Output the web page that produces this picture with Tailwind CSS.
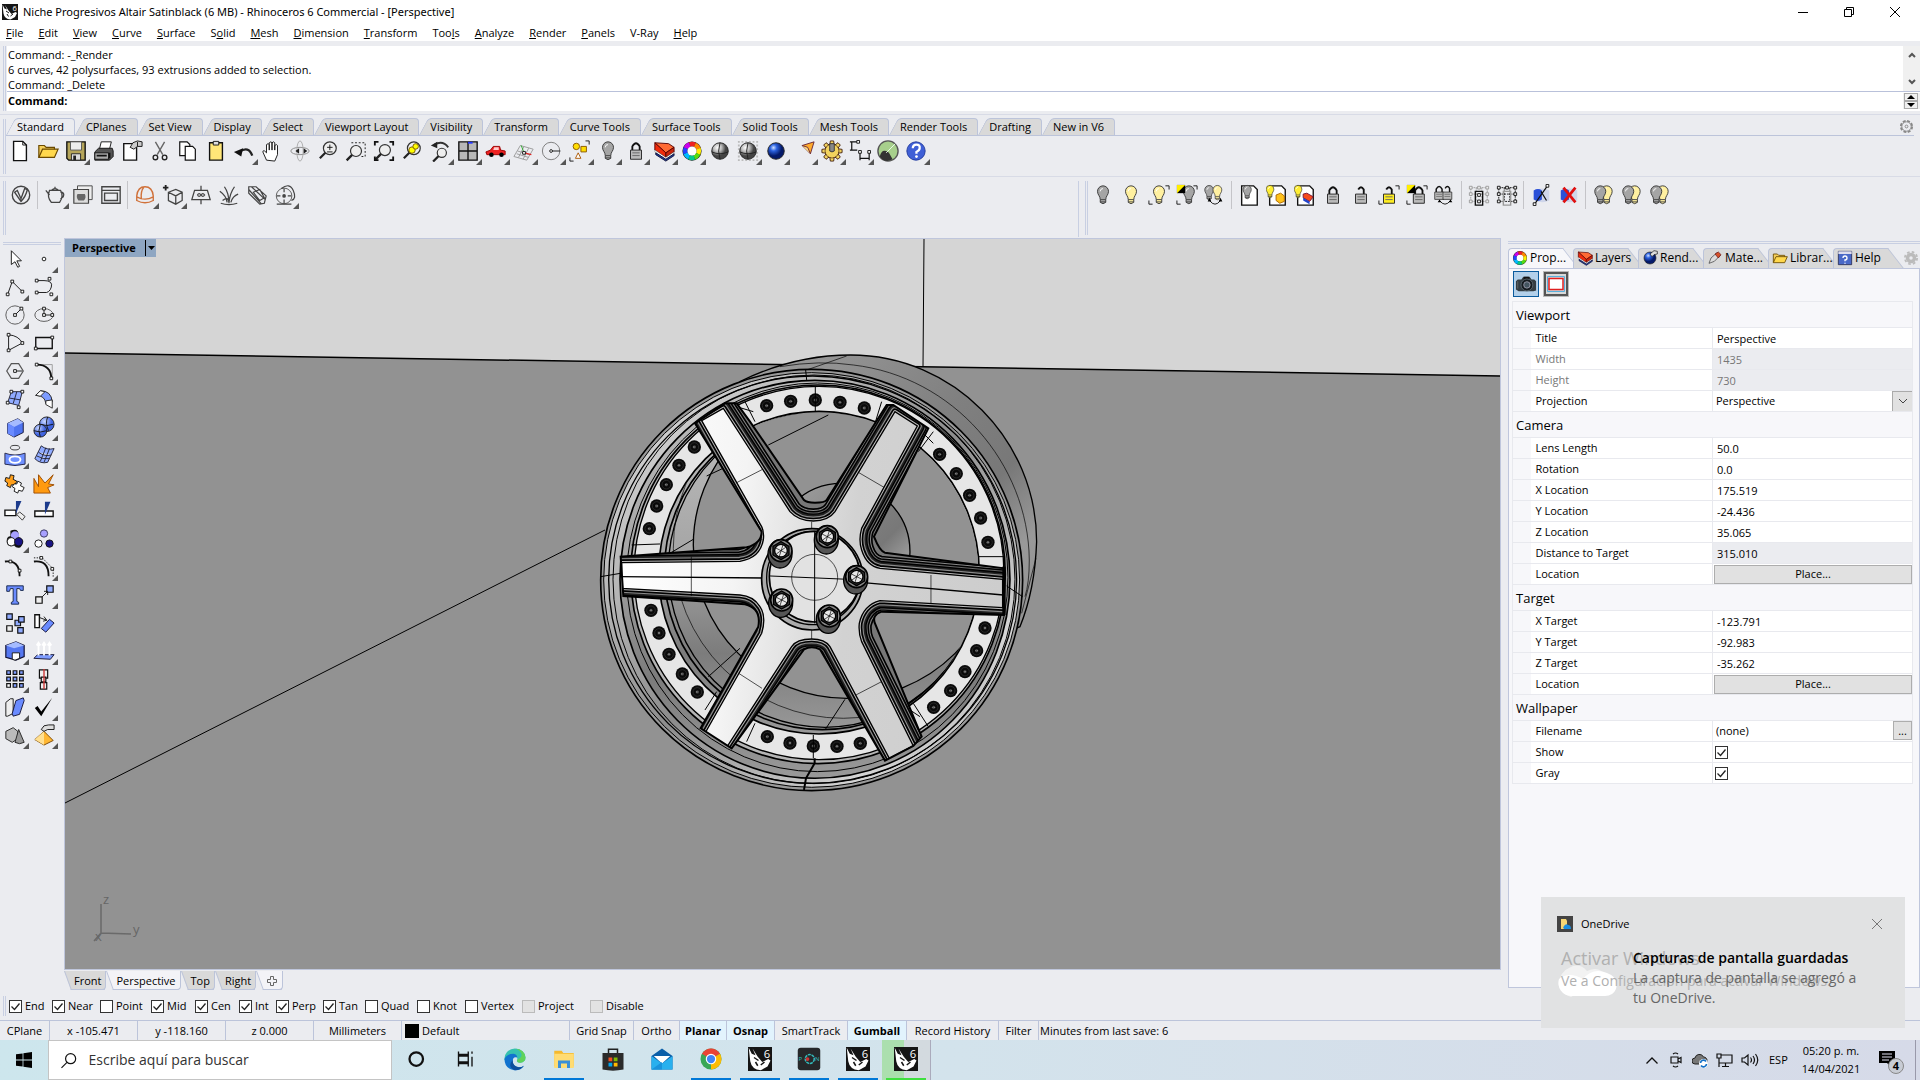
<!DOCTYPE html>
<html lang="en">
<head>
<meta charset="utf-8">
<title>Niche Progresivos Altair Satinblack (6 MB) - Rhinoceros 6 Commercial - [Perspective]</title>
<script src="https://cdn.jsdelivr.net/npm/@tailwindcss/browser@4"></script>
</head>
<body class="flex h-screen flex-col overflow-hidden bg-[#ebecf0] font-['Open_Sans',sans-serif] text-[11px] leading-4 text-black">

<header class="bg-white">
  <div class="flex h-[23px] items-center">
    <svg class="ml-[2px] mr-[5px] size-4" viewBox="0 0 32 32"><use href="#rhino"/></svg>
    <h1 class="flex-1 font-['Noto_Sans',sans-serif]">Niche Progresivos Altair Satinblack (6 MB) - Rhinoceros 6 Commercial - [Perspective]</h1>
    <button aria-label="Minimize" class="grid h-5 w-[46px] place-items-center"><svg class="size-[10px]" viewBox="0 0 10 10" stroke="#000"><path d="M0 5.5h10"/></svg></button>
    <button aria-label="Restore" class="grid h-5 w-[46px] place-items-center"><svg class="size-[10px]" viewBox="0 0 10 10" fill="none" stroke="#000"><path d="M.5 2.500h7v7h-7zM2.500 2.500v-2h7v7h-2"/></svg></button>
    <button aria-label="Close" class="mr-[2px] grid h-5 w-[46px] place-items-center"><svg class="size-[10px]" viewBox="0 0 10 10" stroke="#000"><path d="M0 0l10 10M10 0L0 10"/></svg></button>
  </div>
  <nav id="menu" class="flex h-[18px] items-center gap-[15px] pl-[6px] pb-[2px] pt-1"></nav>
</header>

<section class="mt-[5px] flex h-[65px] shrink-0 pl-[3px]" aria-label="Command history">
  <div class="mr-[1px] w-[3px] border-x border-[#c8cfe2]"></div>
  <div class="flex flex-1 flex-col bg-white">
    <div class="flex h-[46px] border-b border-[#b9c1da]">
      <div class="flex-1 pl-[1px] pt-[1px] leading-[15px]"><p>Command: -_Render</p><p>6 curves, 42 polysurfaces, 93 extrusions added to selection.</p><p>Command: _Delete</p></div>
      <div class="flex w-[17px] flex-col items-center justify-between bg-[#f0f0f0] py-[5px]">
        <svg class="size-2" viewBox="0 0 8 8" fill="none" stroke="#555" stroke-width="2"><path d="M1 6l3-3 3 3"/></svg>
        <svg class="size-2" viewBox="0 0 8 8" fill="none" stroke="#555" stroke-width="2"><path d="M1 2l3 3 3-3"/></svg>
      </div>
    </div>
    <div class="flex flex-1 items-center pb-[2px] font-bold">
      <label for="cmd" class="pl-[1px]">Command:</label><input id="cmd" class="ml-1 h-4 flex-1 outline-none">
      <div class="flex w-[17px] flex-col items-center bg-[#f0f0f0] pr-[2px]">
        <button aria-label="Previous" class="grid h-2 w-[14px] place-items-center border border-[#aaa]"><svg class="h-1 w-2" viewBox="0 0 8 4"><path d="M0 4l4-4 4 4z"/></svg></button>
        <button aria-label="Next" class="grid h-2 w-[14px] place-items-center border border-[#aaa]"><svg class="h-1 w-2" viewBox="0 0 8 4"><path d="M0 0l4 4 4-4z"/></svg></button>
      </div>
    </div>
  </div>
</section>

<section class="mt-[3px] flex h-[63px] shrink-0 border-y border-[#d8dbe6] pl-[3px] pr-[6px]" aria-label="Standard toolbar">
  <div class="mt-1 mb-[2px] w-[3px] border-x border-[#c8cfe2]"></div>
  <div class="min-w-0 flex-1">
    <div class="flex h-[21px] items-end border-b border-[#bcc4da]">
      <div id="tabs" role="tablist" class="flex"></div>
      <button aria-label="Options" class="mb-[1px] ml-auto grid size-4 place-items-center"><svg class="size-[15px]" viewBox="0 0 16 16" fill="none" stroke="#888"><circle cx="8" cy="8" r="6" stroke-width="2" stroke-dasharray="3.100 1.600"/><circle cx="8" cy="8" r="5"/><circle cx="8" cy="8" r="1.500"/></svg></button>
    </div>
    <div id="tb1" class="flex pt-[1px]"></div>
  </div>
</section>

<section class="flex h-[61px] shrink-0 pl-[3px] pt-1" aria-label="V-Ray and visibility toolbars">
  <div class="mb-[3px] w-[3px] border-x border-[#c8cfe2]"></div>
  <div id="tb2" class="mb-[1px] flex w-[1073px] items-start border-r border-[#c8cfe2] pl-[1px]"></div>
  <div class="mb-[3px] ml-[6px] w-[3px] border-x border-[#c8cfe2]"></div>
  <div id="tb3" class="flex items-start pl-[1px]"></div>
</section>

<main class="flex min-h-0 flex-1">
  <aside class="w-16 shrink-0" aria-label="Main tools">
    <div class="mx-[3px] mt-1 h-[3px] border-y border-[#c8cfe2]"></div>
    <div id="tools" class="grid w-[58px] grid-cols-2 pl-[1px]"></div>
  </aside>

  <div class="flex min-w-0 flex-1 flex-col">
    <div class="relative min-h-0 flex-1 border border-[#bfc6dc] bg-[#929292]">
      <svg class="absolute inset-0 size-full" viewBox="0 0 1435 730" preserveAspectRatio="xMidYMid slice" fill="none" stroke="#000">
        <defs>
          <linearGradient id="face" x1="0" y1=".4" x2="1" y2=".5"><stop offset="0" stop-color="#fff"/><stop offset=".3" stop-color="#f4f4f4"/><stop offset=".6" stop-color="#d2d2d2"/><stop offset="1" stop-color="#cdcdcd"/></linearGradient>
          <linearGradient id="rim" x1="0" y1="0" x2="1" y2="1"><stop offset="0" stop-color="#e4e4e4"/><stop offset=".25" stop-color="#bbb"/><stop offset=".5" stop-color="#8c8c8c"/><stop offset=".8" stop-color="#d5d5d5"/><stop offset="1" stop-color="#999"/></linearGradient>
          <linearGradient id="barrel" x1="0" y1="0" x2="1" y2="1"><stop offset="0" stop-color="#a5a5a5"/><stop offset=".45" stop-color="#808080"/><stop offset=".62" stop-color="#787878"/><stop offset=".75" stop-color="#999"/><stop offset="1" stop-color="#8a8a8a"/></linearGradient>
          <linearGradient id="inner" x1="0" y1="0" x2="0" y2="1"><stop offset="0" stop-color="#bdbdbd"/><stop offset=".45" stop-color="#a5a5a5"/><stop offset=".75" stop-color="#7c7c7c"/><stop offset="1" stop-color="#999"/></linearGradient>
          <clipPath id="star"><path d="M345 250L435 190L470 190L510 245L672 480Q680 488 705 488Q735 488 740 480L920 195L940 195L1045 265L882 590Q900 635 915 638L1272 685V825L905 815Q875 825 885 850L1025 1190L1000 1218L915 1262L720 928Q695 915 672 928L455 1225L362 1165L535 860Q545 805 495 793L130 768L122 650L500 622Q545 610 545 575Z"/></clipPath>
          <g id="bolt"><circle r="20" fill="#0a0a0a" stroke="none"/><circle r="13" stroke="#444" stroke-width="1.500"/><circle r="5" fill="#999" stroke="#000" stroke-width="2"/><path d="M0-6V6" stroke="#222" stroke-width="2"/></g>
          <g id="lug"><ellipse cx="-3" cy="10" rx="36" ry="42" fill="#555" stroke-width="4"/><circle r="33" fill="#888" stroke-width="5"/><path d="M0-27L24-13L24 13L0 27L-24 13L-24-13Z" fill="#333" stroke-width="4"/><circle r="19" fill="#e8e8e8" stroke-width="4"/><path d="M-16-8L16 8M-5 17L6-17M-14 10L14-10" stroke-width="2"/></g>
        </defs>
        <path d="M0 0H1435V137L0 114Z" fill="#d5d5d5" stroke="none"/>
        <path d="M0 114L1435 137" stroke-width="1.500"/>
        <path d="M859 0L858 128M0 564L540 291"/>
        <g transform="translate(515 101) scale(.3333)" stroke-width="4">
          <path d="M480 125Q640 45 812 45C1120 45 1370 300 1370 605Q1365 750 1320 860L700 1100L300 600Z" fill="url(#barrel)"/>
          <path d="M600 80Q720 60 820 75C1120 110 1345 370 1348 660Q1348 730 1335 770M680 90L800 48M1325 820L1368 655" stroke-width="2"/>
          <ellipse cx="695" cy="720" rx="633" ry="632" fill="#999" stroke-width="5"/>
          <ellipse cx="695" cy="720" rx="624" ry="622" fill="url(#rim)" stroke-width="3"/>
          <ellipse cx="698" cy="719" rx="612" ry="611" stroke-width="4"/>
          <ellipse cx="702" cy="718" rx="603" ry="613" stroke-width="3"/>
          <ellipse cx="705" cy="718" rx="585" ry="597" fill="url(#inner)" stroke-width="5"/>
          <ellipse cx="712" cy="712" rx="572" ry="583" stroke-width="3"/>
          <ellipse cx="714" cy="703" rx="562" ry="568" fill="#b5b5b5" stroke-width="5"/>
          <ellipse cx="717" cy="699" rx="555" ry="560" fill="#e6e6e6" stroke-width="4"/>
          <ellipse cx="717" cy="698" rx="481" ry="484" fill="url(#inner)" stroke-width="5"/>
          <clipPath id="hole"><ellipse cx="717" cy="698" rx="478" ry="481"/></clipPath>
          <g clip-path="url(#hole)">
            <ellipse cx="727" cy="693" rx="474" ry="476" stroke-width="5"/>
            <ellipse cx="735" cy="688" rx="470" ry="474" stroke-width="4"/>
            <circle cx="790" cy="625" r="510" stroke-width="2"/>
            <circle cx="800" cy="615" r="460" fill="#929292"/>
            <path d="M565 315L745 225M380 408L440 380M270 640L340 598M385 1010L480 925M735 1170L795 1078" stroke-width="3"/>
            <circle cx="785" cy="635" r="205" fill="url(#barrel)"/>
          </g>
          <path d="M495 185L525 245M470 200L520 215M905 185L885 250M1060 275L1015 335M1035 285L1060 310M155 615L240 612M1195 650H1275M1195 680L1275 685M1000 1090L1045 1160M990 1110L1020 1130M500 1205L525 1150M375 1110L410 1055" stroke-width="3"/>
          <g id="bolts"></g>
          <g clip-path="url(#star)">
            <path d="M0 0H1400V1400H0Z" fill="#777" stroke="none"/>
            <g stroke-linejoin="round">
              <path id="top" d="M365 242L430 205L630 515Q655 543 700 543Q745 543 765 515L945 215L1012 258L845 565Q835 600 845 630Q860 678 900 685L1268 718V803L900 782Q850 795 838 850Q835 880 845 905L1000 1218L928 1255L750 920Q735 897 695 897Q650 897 635 920L440 1222L375 1180L545 880Q560 830 540 800Q520 768 480 765L125 745V668L480 664Q540 655 550 600Q553 575 545 560Z" stroke-width="76"/>
            </g>
            <g stroke-linejoin="round" id="bands"></g>
            <path d="M365 242L430 205L630 515Q655 543 700 543Q745 543 765 515L945 215L1012 258L845 565Q835 600 845 630Q860 678 900 685L1268 718V803L900 782Q850 795 838 850Q835 880 845 905L1000 1218L928 1255L750 920Q735 897 695 897Q650 897 635 920L440 1222L375 1180L545 880Q560 830 540 800Q520 768 480 765L125 745V668L480 664Q540 655 550 600Q553 575 545 560Z" fill="url(#face)" stroke-width="4"/>
          </g>
          <path d="M345 250L435 190L470 190L510 245L672 480Q680 488 705 488Q735 488 740 480L920 195L940 195L1045 265L882 590Q900 635 915 638L1272 685V825L905 815Q875 825 885 850L1025 1190L1000 1218L915 1262L720 928Q695 915 672 928L455 1225L362 1165L535 860Q545 805 495 793L130 768L122 650L500 622Q545 610 545 575Z" stroke-width="6"/>
          <path d="M470 428L548 388M835 397L912 442M334 650V768M1053 705V790M476 1000L546 1045M828 1065L905 1025M695 545V565M695 870V897" stroke-width="2"/>
          <path d="M120 710L550 714M850 728L1270 765" stroke-width="4"/>
          <path d="M1272 680V825" stroke-width="10"/>
          <circle cx="697" cy="718" r="152" fill="#aaa" stroke-width="5"/>
          <circle cx="700" cy="714" r="140" fill="#b8b8b8" stroke-width="4"/>
          <circle cx="704" cy="710" r="136" fill="#e2e2e2" stroke-width="5"/>
          <circle cx="704" cy="712" r="69" stroke-width="2"/>
          <path d="M704 575V850M570 708L850 720" stroke-width="3"/>
          <g id="lugs"></g>
          <path d="M704 1255V1270L678 1315L672 1350" stroke-width="6"/>
          <path d="M677 90L680 120M62 710L122 700M1280 738L1328 770M706 140V215M700 1185V1255" stroke-width="3"/>
        </g>
        <path d="M36 665V694L66 695M29 702L36 694" stroke="#6a6a6a" stroke-width="1.500"/>
        <g fill="#666" stroke="none" font-family="Open Sans, sans-serif" font-size="13"><text x="38" y="665">z</text><text x="68" y="695">y</text><text x="30" y="702">x</text></g>
      </svg>
      <div class="relative flex h-[18px] w-[91px] items-center bg-[#8ea6c2] pl-[7px] font-bold">
        <span class="flex-1">Perspective</span>
        <button aria-label="Viewport menu" class="grid h-4 w-[11px] place-items-center border-l border-black"><svg class="h-1 w-[7px]" viewBox="0 0 7 4"><path d="M0 0h7l-3.500 4z"/></svg></button>
      </div>
    </div>
    <div id="vtabs" role="tablist" class="flex h-6 items-start pt-[1px]"></div>
  </div>

  <aside class="mb-[-6px] flex w-[419px] shrink-0 flex-col pl-[7px]" aria-label="Properties panel">
    <div class="mt-[3px] h-[3px] border-y border-[#c8cfe2]"></div>
    <div id="ptabs" role="tablist" class="mt-1 flex h-5 items-end"></div>
    <div class="mb-3 flex-1 border border-[#bfc6dc] bg-[#f7f7fa] pl-[3px] pr-[6px] pt-[2px]">
      <div class="flex gap-1 pl-[1px]">
        <button aria-label="Camera" class="grid size-[26px] place-items-center border border-[#0a5a9c] bg-[#b3d0ea]"><svg class="size-[22px]" viewBox="0 0 24 24"><path d="M1 9l2-2h4l2-3h7l2 3h3l2 2v10l-3 1H4l-3-2z" fill="#333c42"/><path d="M10 4h5l1 3H9z" fill="#111"/><circle cx="13" cy="13" r="6.500" fill="#161c20" stroke="#5b6870"/><circle cx="13" cy="13" r="3.500" fill="#445560" stroke="#99a"/><path d="M3 9v8" stroke="#666"/></svg></button>
        <button aria-label="Frame" class="grid size-[26px] place-items-center border border-[#bbb] bg-[#e8e8e8]"><svg class="size-6" viewBox="0 0 24 24"><path d="M1 1h22v22H1z" fill="#d8d8d8" stroke="#555" stroke-width="2"/><path d="M3.500 4.500h17v15h-17z" fill="#d8d8d8" stroke="#58b0dd"/><path d="M5 6.500h14v11H5z" fill="#fff" stroke="#e02020" stroke-width="1.500"/></svg></button>
      </div>
      <div id="props" class="mt-1"></div>
    </div>
  </aside>
</main>

<section class="flex h-[26px] shrink-0 items-center pb-[2px] pl-[3px]" aria-label="Object snaps">
  <div class="mr-[3px] h-5 w-[3px] border-x border-[#c8cfe2]"></div>
  <div id="osnap" class="flex items-center"></div>
</section>

<footer id="status" class="flex h-5 shrink-0 border-t border-[#bcc4da] leading-[19px]"></footer>

<nav class="flex h-10 shrink-0 items-stretch bg-linear-to-r from-[#cde6ed] via-[#d3e3ec] via-50% to-[#d6dae8]" aria-label="Taskbar">
  <button aria-label="Start" class="grid w-12 place-items-center"><svg class="size-4" viewBox="0 0 16 16"><path d="M0 2.300L6.600 1.400V7.600H0zM7.400 1.300L16 0V7.600H7.400zM0 8.400H6.600V14.600L0 13.700zM7.400 8.400H16V16L7.400 14.700z"/></svg></button>
  <label class="flex w-[344px] items-center gap-3 border border-[#c4c4c4] bg-white pl-3">
    <svg class="size-[17px]" viewBox="0 0 17 17" fill="none" stroke="#111" stroke-width="1.300"><circle cx="10.500" cy="6.500" r="5.500"/><path d="M6.500 10.500L0.500 16.500"/></svg>
    <input class="w-full text-sm outline-none placeholder:text-[#333]" placeholder="Escribe aquí para buscar" aria-label="Buscar">
  </label>
  <div id="apps" class="flex"></div>
  <div class="ml-auto flex items-center">
    <button aria-label="Show hidden icons" class="mr-3"><svg class="h-[7px] w-3" viewBox="0 0 12 7" fill="none" stroke="#111" stroke-width="1.300"><path d="M.5 6.500L6 1l5.500 5.500"/></svg></button>
    <svg class="mr-[10px] h-4 w-3" viewBox="0 0 12 16" fill="none" stroke="#111" stroke-width="1.200"><path d="M1 5h7v6H1zM8 7l3-1.500v5L8 9M3 2q2.500-2 5 0M3 14q2.500 2 5 0"/></svg>
    <svg class="mr-2 size-4" viewBox="0 0 16 16"><path d="M3 12a3 3 0 010-6 4.500 4.500 0 018.500-1A3.500 3.500 0 0115 9v3z" fill="#777" stroke="#222"/><circle cx="11.500" cy="11.500" r="4.500" fill="#fff"/><path d="M8.500 11a3 3 0 015.500-1.500M14.500 12a3 3 0 01-5.500 1.500" stroke="#1270c8" fill="none" stroke-width="1.700"/></svg>
    <svg class="mr-2 h-4 w-[17px]" viewBox="0 0 17 16" fill="none" stroke="#111" stroke-width="1.200"><path d="M5 3h11v8H3.500M9.500 11v3M6 14.500h7M1 2h4v4H1zM3 6v9"/></svg>
    <svg class="mr-[10px] h-4 w-[18px]" viewBox="0 0 18 16" fill="none" stroke="#111" stroke-width="1.200"><path d="M1 6h2.500L7 3v10L3.500 10H1zM9.500 5.500q2 2.500 0 5M12 4q3 4 0 8M14.500 2q4.500 6 0 12"/></svg>
    <span class="mr-2 w-6">ESP</span>
    <time class="mr-[18px] w-[60px] text-center leading-[18px]">05:20 p. m.<br>14/04/2021</time>
    <button aria-label="Notifications" class="relative mr-3 h-6 w-6"><svg class="h-6 w-6" viewBox="0 0 24 24"><path d="M0 3h16v12h-4v4l-4-4H0z"/><path d="M3 6h10M3 9h10M3 12h7" stroke="#dde"/></svg><span class="absolute -right-[1px] bottom-[-2px] size-4 rounded-full border border-[#888] bg-[#c8ccd4] text-center font-bold leading-[14px]">4</span></button>
    <div class="h-full w-[5px] border-l border-[#99a]"></div>
  </div>
</nav>

<div class="absolute bottom-[52px] right-[15px] h-[131px] w-[364px] bg-[#e1e2e3]" role="alert">
  <p class="absolute left-5 top-[45px] whitespace-nowrap text-lg leading-8 text-[#b0b0b0]">Activar Windows</p>
  <svg class="absolute left-4 top-[68px] h-8 w-[60px]" viewBox="0 0 60 32"><path d="M14 32a14 15 0 01-2-29Q22-3 30 6Q44 0 48 12L14 32z" fill="#f2f2f2"/><path d="M14 31A13 13 0 012 14Q12 6 26 14Q36 2 50 8Q62 12 59 24Q56 31 48 31z" fill="#fff"/></svg>
  <p class="absolute left-5 top-[74px] whitespace-nowrap text-[14px] leading-5 text-[#b0b0b0]">Ve a Configuración para activar Windows.</p>
  <div class="relative flex h-[54px] items-center gap-2 pl-4 pr-[23px]">
    <svg class="size-4" viewBox="0 0 16 16"><path d="M0 0h16v16H0z" fill="#444"/><path d="M4 3h5l1 2v8H4z" fill="#f7d774"/><path d="M7 13a2 2 0 010-3q2-3 4-1 3 0 3 4z" fill="#1a8fe3"/></svg>
    <span class="flex-1">OneDrive</span>
    <button aria-label="Dismiss"><svg class="size-[10px]" viewBox="0 0 10 10" stroke="#777"><path d="M0 0l10 10M10 0L0 10"/></svg></button>
  </div>
  <div class="relative -mt-[3px] pl-[92px] text-[14px] leading-5"><p class="font-semibold">Capturas de pantalla guardadas</p><p class="text-[#666]">La captura de pantalla se agregó a<br>tu OneDrive.</p></div>
</div>

<svg class="absolute size-0" aria-hidden="true"><defs><radialGradient id="gs" cx=".35" cy=".3"><stop offset="0" stop-color="#fff"/><stop offset=".5" stop-color="#bbb"/><stop offset="1" stop-color="#444"/></radialGradient><radialGradient id="gb" cx=".35" cy=".3"><stop offset="0" stop-color="#cfe0ff"/><stop offset=".4" stop-color="#2c62e0"/><stop offset="1" stop-color="#051a6a"/></radialGradient><radialGradient id="gl" cx=".35" cy=".3"><stop offset="0" stop-color="#c9d7ff"/><stop offset="1" stop-color="#3f63e0"/></radialGradient></defs><symbol id="rhino" viewBox="0 0 32 32"><path d="M0 0h32v32H0z" fill="#151515"/><path d="M1 1l4 8 5 2-4-9 7 11 6 7 8-4 3 2-4 8-9 5q-12-1-14-12z" fill="#fff"/><path d="M8 14l6 4M17 24l5-4M10 20l3 5" stroke="#151515" stroke-width="2"/><text x="21" y="14" font-size="15" font-family="Open Sans, sans-serif" fill="#fff">6</text></symbol></svg>

<script>
const $ = id => document.getElementById(id);
const K = 'fill="none" stroke="#111"';
const bulb = (c, x = 0, s = 1) => `<g transform="translate(${x} 0) scale(${s})"><path d="M12 2a6 6 0 00-6 6c0 4 3 5 3 9v3q3 3 6 0v-3c0-4 3-5 3-9a6 6 0 00-6-6z" fill="${c}" stroke="#333"/><path d="M9 17h6M9 19.500h6" stroke="#444"/><path d="M9 8q0-3 3-3" stroke="#fff" fill="none"/></g>`;
const lock = (c, open, x = 0, s = 1) => `<g transform="translate(${x} 0) scale(${s})"><path d="${open ? 'M9 6q3-5 6 0v5' : 'M8 11V7q4-7 8 0v4'}" fill="none" stroke="#111" stroke-width="2"/><path d="M6 11h12v10H6z" fill="${c}" stroke="#222"/><path d="M8 14h8M8 17h8" stroke="#666"/></g>`;
const corners = `<path d="M19 2h4v4M1 18v4h4" ${K}/>`;
const page = `<path d="M4 2h13l4 4v17H4z" fill="#fff" stroke="#111" stroke-width="1.500"/>`;
const sq = (x, y, f = '#fff') => `<path d="M${x-1.5} ${y-1.5}h3v3h-3z" fill="${f}" stroke="#111"/>`;
const box = (x, y, s, f = '#90abff') => `<path d="M${x} ${y}h${s}v${s}h-${s}z" fill="${f}" stroke="#111" stroke-width="1.300"/>`;
const ball = (g, x = 12, y = 12, r = 9) => `<circle cx="${x}" cy="${y}" r="${r}" fill="url(#${g})" stroke="#222"/>`;
const mag = (x, y, r) => `<circle cx="${x}" cy="${y}" r="${r}" fill="#eee" stroke="#333" stroke-width="1.300"/><path d="M${x-r*.7} ${y+r*.7}L${x-r*.7-6} ${y+r*.7+6}" stroke="#222" stroke-width="2.500"/>`;
const G = '#a5a5a5', Y = '#fff0a0';
const cage = c => `<path d="M3 4h18v15H3zM3 11h18M9 4v15M15 4v15" fill="none" stroke="${c}" stroke-dasharray="2 1"/>` + [[3,4],[12,4],[21,4],[3,11],[21,11],[3,19],[21,19]].map(p => `<path d="M${p[0]-1.500} ${p[1]-1.500}h3v3h-3z" fill="#eee" stroke="${c}"/>`).join('');
const I = {
 new:'<path d="M5 1.500h10l4 4v17H5z" fill="#fff" stroke="#111" stroke-width="1.500"/><path d="M15 1.500v4h4" fill="none" stroke="#111"/>',
 open:'<path d="M2 19V6h6l2 2h9v3" fill="#f5cf5a" stroke="#6b4a00" stroke-width="1.300"/><path d="M2 19l4-9h17l-4 9z" fill="#ffd84d" stroke="#6b4a00" stroke-width="1.300"/>',
 save:'<path d="M2 2h20v20H4l-2-2z" fill="#b5a55a" stroke="#111" stroke-width="1.500"/><path d="M6 2h12v9H6z" fill="#eee" stroke="#555"/><path d="M7 15h10v7H7z" fill="#ddd" stroke="#222"/><path d="M9 17h3v5H9z" fill="#222"/>',
 print:'<path d="M7 10L9 2h11l-2 8z" fill="#fff" stroke="#111"/><path d="M2 13l4-4h15l1 3v6l-4 4H2z" fill="#555" stroke="#111"/><path d="M2 14h15v7H2z" fill="#aaa" stroke="#111"/><path d="M4 17h11M18 14v6" stroke="#111" stroke-width="2"/>',
 props:'<path d="M3 4h14v18H3z" fill="#fff" stroke="#111" stroke-width="1.500"/><path d="M10 8l3-5 5-2 5 1v5h-5l-4 3z" fill="#ccc" stroke="#111"/><path d="M18 2v5" stroke="#111"/>',
 cut:'<path d="M7 2l8 14M17 2L9 16" stroke="#666" stroke-width="1.500"/><circle cx="7" cy="19" r="2.500" fill="none" stroke="#222" stroke-width="1.500"/><circle cx="17" cy="19" r="2.500" fill="none" stroke="#222" stroke-width="1.500"/>',
 copy:'<path d="M3 2h8l3 3v12H3z" fill="#fff" stroke="#111" stroke-width="1.300"/><path d="M9 7h8l3 3v12H9z" fill="#fff" stroke="#111" stroke-width="1.300"/>',
 paste:'<path d="M5 3h14v19H5z" fill="#ffe678" stroke="#111" stroke-width="1.500"/><path d="M9 1.500h6v4H9z" fill="#ddd" stroke="#111"/>',
 undo:'<path d="M21 17Q17 6 7 13" fill="none" stroke="#222" stroke-width="2.500"/><path d="M1 13l10-4-2 9z" fill="#111"/>',
 hand:'<path d="M6 22L2 13q0-2 2-1l2 2V5q2-2 3 0v6V3q2-2 3 0v8V3q2-2 3 0v8V6q2-2 3 0v10l-3 7z" fill="#fff" stroke="#111"/>',
 rotate:'<ellipse cx="12" cy="12" rx="10" ry="4" fill="none" stroke="#888"/><ellipse cx="12" cy="12" rx="3.500" ry="11" fill="none" stroke="#aaa"/><path d="M7 12l4-3v6zM20 12l-4-3v6z" fill="#222"/>',
 zoom: mag(14,9,7)+'<path d="M11 8h6M14 5v6M11 13h6" stroke="#111"/>',
 zoomwin: mag(12,12,6)+'<path d="M7 3h15v15h-5" fill="none" stroke="#111" stroke-dasharray="2 2"/>',
 zoomext: mag(13,11,6)+'<path d="M2 6V2h4M18 2h4v4M22 18v4h-4M2 18v4h4" fill="none" stroke="#111" stroke-width="2"/>',
 zoomsel: mag(14,9,7)+'<circle cx="12" cy="11" r="3.500" fill="#ff0" stroke="#750"/><circle cx="16" cy="7" r="3" fill="#ff0" stroke="#750"/>',
 zoomundo: mag(14,14,5)+'<path d="M21 8Q15 0 6 5" fill="none" stroke="#333" stroke-width="2"/><path d="M2 6l7-4v7z" fill="#222"/>',
 four:'<path d="M2 2h20v20H2zM12 2v20M2 12h20" fill="#b8b8b8" stroke="#111" stroke-width="1.500"/><path d="M12 3h5" stroke="#23f" stroke-width="2"/>',
 car:'<path d="M1 13l5-2 3-4h7l1 4 5 1v4H2z" fill="#e22" stroke="#900"/><path d="M9 11l1-3h5v3z" fill="#fcc"/><circle cx="7" cy="16" r="2.500"/><circle cx="18" cy="16" r="2.500"/>',
 cplane:'<path d="M1 18L8 6l14 4-7 12zM5 12l13 4M4 15l13 4M12 7l-6 12M17 9l-6 12" fill="none" stroke="#999"/><path d="M12 14l8 2" stroke="#d22" stroke-width="1.500"/><path d="M12 14l-3-8" stroke="#2a2"/>'+sq(12,14),
 circ:'<circle cx="11" cy="12" r="9.500" fill="none" stroke="#777"/><path d="M11 12h10" stroke="#111"/><circle cx="11" cy="12" r="1.500" fill="#fff" stroke="#111"/>',
 sel:'<circle cx="8" cy="7" r="3.500" fill="#fd0" stroke="#850"/><path d="M13 7h6v6h-6z" fill="#fd0" stroke="#850"/><path d="M10 14l3 6H7z" fill="#fff" stroke="#a50"/><path d="M18 1h4v4M1 19v4h4" fill="none" stroke="#111"/>',
 bulb: bulb(G), lock: lock('#bbb'),
 layers:'<path d="M2 3l15 1 6 4-9 6z" fill="#ff6a34" stroke="#500"/><path d="M2 3v8l12 8v-5z" fill="#f02a0a" stroke="#500"/><path d="M14 14l9-6v5l-9 6z" fill="#c8240a" stroke="#500"/><path d="M2 11l12 8 9-6v2l-9 6-12-8z" fill="#fff" stroke="#777" stroke-width=".5"/><path d="M3 14l11 7 9-6v2l-9 6-11-7z" fill="#1b3ea8" stroke="#113"/>',
 color:'<circle cx="12" cy="12" r="7.500" fill="none" stroke="#222" stroke-width="6"/>'+['#e22','#f80','#fe0','#5d1','#0c8','#0bf','#24f','#c0e'].map((c,i)=>`<circle cx="12" cy="12" r="7.500" fill="none" stroke="${c}" stroke-width="5" stroke-dasharray="5.900 50" transform="rotate(${i*45-110} 12 12)"/>`).join('')+'<circle cx="12" cy="12" r="5" fill="#fff"/>',
 sphere: ball('gs')+'<path d="M3 13q9 4 18 0M12 3q-3 9 0 18" fill="none" stroke="#222"/>',
 sphere2:'<path d="M1 2h22M1 6h22M1 10h22M1 14h22M1 18h22M1 22h22" stroke="#bbb" stroke-width="2" stroke-dasharray="2 2"/>'+ball('gs')+'<path d="M3 13q9 4 18 0M12 3q-3 9 0 18" fill="none" stroke="#222"/>',
 blue: ball('gb'),
 spot:'<path d="M10 6l13-4-4 13z" fill="#ffac2e" stroke="#623"/><path d="M10 6l6 2 3 7" fill="#ffe08a" stroke="#623"/>',
 gear:'<g fill="#f2d35e" stroke="#421">'+[0,45,90,135,180,225,270,315].map(a=>`<path d="M9.500 6l.7-5h3.600l.7 5z" transform="rotate(${a} 12 12)"/>`).join('')+'<circle cx="12" cy="12" r="7.500"/></g><circle cx="12" cy="12" r="7" fill="#f2d35e"/><path d="M9.500 4h5v8q-2.500 2-5 0z" fill="#888" stroke="#333"/>',
 dims:'<path d="M3 2v9M1 2h8M1 11h8M12 12v10M22 12v10M12 20h10" fill="none" stroke="#111" stroke-width="1.300"/>'+sq(10,2)+sq(12,13)+sq(22,13),
 grass:'<circle cx="12" cy="12" r="11" fill="#a7cf8c" stroke="#555" stroke-width="1.500"/><path d="M3 18q2-8 7-6l3 2 4 7q-8 5-14-3z" fill="#333"/><path d="M10 14L20 4" stroke="#efe"/>',
 help:'<circle cx="12" cy="12" r="10" fill="#3f5fd6" stroke="#223a9a"/><path d="M8.500 9q0-4 4-4t3.500 4q0 2-3.500 4v2" fill="none" stroke="#fff" stroke-width="2.500"/><circle cx="12.500" cy="18" r="1.500" fill="#fff"/>',
 vray:'<circle cx="12" cy="12" r="9.500" fill="none" stroke="#444" stroke-width="1.500"/><path d="M5 9l3-2 4 9 4-11 3 1q-2 8-7 13z" fill="none" stroke="#444" stroke-width="1.500"/>',
 teapot:'<path d="M6 7h12q4 6-1 13H8Q3 14 6 7zM6 12L2 7M18 9q5 0 3 5l-3 2M8 7q4-4 8 0M12 5V3" fill="none" stroke="#444" stroke-width="1.400"/>',
 teapotwin:'<path d="M6 2h16v15H6z" fill="#eee" stroke="#444"/><path d="M2 6h16v15H2z" fill="#ddd" stroke="#444" stroke-width="1.300"/><path d="M6 11h8q2 4-1 7H7q-3-4-1-7z" fill="#666"/>',
 win:'<path d="M2 3h20v18H2zM2 7h20M5 10h14v8H5z" fill="none" stroke="#444" stroke-width="1.500"/>',
 dome:'<path d="M3 18V13q1-10 9-10t9 10v5q-9 5-18 0zM3 14q9 5 18 0M11 3q-4 5-3 13" fill="none" stroke="#d0713a" stroke-width="1.500"/>',
 cube:'<path d="M7 9l8-3 7 3v9l-7 4-8-4zM7 9l8 4 7-4M15 13v9" fill="none" stroke="#444" stroke-width="1.400"/><path d="M4 1v6M1 4h6" stroke="#222" stroke-width="2"/>',
 plane:'<path d="M5 7h14l3 10H2zM12 2v5M12 17v5" fill="none" stroke="#444" stroke-width="1.400"/><path d="M8 12q2-3 4 0t4 0q-2-3-4 0t-4 0" fill="none" stroke="#444" stroke-width="1.300"/>',
 fur:'<path d="M12 21Q12 10 7 3M10 20Q9 13 2 8M12 20q1-10 6-17M14 20q2-7 8-9M5 18q6-5 7 2M3 21q9 3 18 0" fill="none" stroke="#444" stroke-width="1.400"/>',
 clip:'<path d="M3 3h8l11 10-2 8-5 1L3 10zM3 6l14 16M6 3l15 14M8 9l7-3 5 9-5 3z" fill="none" stroke="#444" stroke-width="1.300"/>',
 tape:'<circle cx="11" cy="13" r="8.500" fill="none" stroke="#555"/><path d="M8 5q9-7 13 2t-2 11M3 22h16M11 5v4M11 17v4M3 13h4M15 13h4" fill="none" stroke="#444" stroke-width="1.300"/><circle cx="11" cy="13" r="2" fill="#444"/>',
 bulbY: bulb(Y), bulbSel: bulb(Y)+corners, bulbInv: bulb(G,2)+corners+'<path d="M1 1h9v9H1z"/><path d="M1 10V1h9z" fill="#fe0"/>',
 bulbSwap: bulb(G,-4,.8)+bulb(Y,5,.8)+'<path d="M6 18q6 8 12 0" fill="none" stroke="#111"/><path d="M4 19l2-4 2 4zM16 19l2-4 2 4z"/>',
 pageBulb: page+bulb(G,1,.75), pageObj: page+bulb('#fe3',-4,.7)+'<path d="M11 12l5-2 4 3v6l-5 2-4-3z" fill="#ffc21a" stroke="#a60"/>',
 pageLay: page+bulb('#fe3',-4,.7)+'<path d="M10 11l4-1 7 4-4 5-7-4z" fill="#f54a1c" stroke="#713"/><path d="M10 15v3l7 4v-3z" fill="#24c"/>',
 unlock: lock('#bbb',1), lockSel: lock('#fe2',1)+corners, lockInv: lock('#bbb',0,2)+corners+'<path d="M1 1h9v9H1z"/><path d="M1 10V1h9z" fill="#fe0"/>',
 lockSwap: lock('#bbb',0,-4,.8)+lock('#bbb',1,5,.8)+'<path d="M6 18q6 8 12 0" fill="none" stroke="#111"/><path d="M4 20l2-3 2 3zM16 20l2-3 2 3z"/>',
 cageOff: cage('#999')+'<path d="M8 8h8v15H8z" fill="none" stroke="#111" stroke-width="1.500"/>'+sq(12,12)+sq(12,19),
 cageOn: cage('#111')+'<path d="M8 8h8v15H8z" fill="none" stroke="#999" stroke-width="1.500"/>',
 clipOn:'<path d="M5 7q9-4 16 0v11q-7 4-16 0z" fill="#cfd6ea"/><path d="M4 7q5-3 9 0v10q-4 3-9 0z" fill="#2a50d8"/><path d="M5 22L19 2M12 8l6 10" stroke="#111" stroke-width="1.300"/>'+sq(5,22)+sq(19,2),
 clipOff:'<path d="M5 7q9-4 16 0v11q-7 4-16 0z" fill="#cfd6ea"/><path d="M3 7q5-3 9 0v10q-4 3-9 0z" fill="#2a50d8"/><path d="M6 4l13 16M19 4L6 20" stroke="#e01010" stroke-width="3"/>',
 two: bulb(Y,4)+bulb(G,-3),
 ptr:'<path d="M8 3v15l4-3 3 6 2-1-3-6h5z" fill="#fff" stroke="#111"/>', pt:'<circle cx="12" cy="12" r="2" fill="#fff" stroke="#111"/>',
 pline:'<path d="M4 20L9 6l11 11" '+K+'/>'+sq(4,20)+sq(9,6)+sq(20,17), curve:'<path d="M4 5h8q10 0 8 7t-8 6H4" '+K+'/>'+sq(4,5)+sq(18,3)+sq(4,18)+sq(20,20),
 circle:'<circle cx="12" cy="12" r="10" fill="none" stroke="#555"/><path d="M12 12l6-6" stroke="#111"/>'+sq(12,12)+sq(19,5), ellipse:'<ellipse cx="12" cy="12" rx="10" ry="7" fill="none" stroke="#555"/><path d="M12 5v7h9" '+K+'/>'+sq(12,5)+sq(12,12)+sq(21,12),
 arc:'<path d="M5 3v17l15-8Q16 4 5 3" '+K+'/>'+sq(5,3)+sq(5,20)+sq(20,12), rect:'<path d="M3 6h18v12H3z" fill="none" stroke="#111" stroke-width="1.500"/>'+sq(3,18)+sq(21,6),
 poly:'<path d="M8 4h8l5 8-5 8H8l-5-8z" fill="none" stroke="#555" stroke-width="1.300"/><path d="M12 12h8" stroke="#111"/>'+sq(12,12), fillet:'<path d="M4 5h17v17" fill="none" stroke="#999"/><path d="M4 5q16 0 16 16" fill="none" stroke="#111" stroke-width="2"/>'+sq(4,5)+sq(20,20),
 srf:'<path d="M8 4h12l-4 15-12-3zM6 11l12 2M14 4l-4 13" fill="#90abff" stroke="#223"/>'+sq(8,4)+sq(20,4)+sq(4,16)+sq(16,21), strip:'<path d="M8 3q12 0 13 12l-7 2Q13 8 3 8z" fill="#7c9bff" stroke="#222"/><path d="M3 8l5-5 5 1-5 5zM21 13v9l-7-4v-4z" fill="#fff" stroke="#222"/>',
 bbox:'<path d="M4 8l11-5 6 4v11l-10 5-7-4z" fill="#4f74f0" stroke="#113"/><path d="M4 8l7 4 10-5-6-4z" fill="#a5bbff"/><path d="M4 8l7 4v11l-7-4z" fill="#6a8bff"/>',
 balls: ball('gl',15,9,8)+ball('gl',8,16,7)+'<path d="M1 16q7 3 14 0M8 9q-3 7 0 14M8 9q7 3 14 0M16 1q-3 7 1 15" '+K+'/>',
 proj:'<ellipse cx="12" cy="4" rx="5" ry="2.500" fill="none" stroke="#333"/><path d="M1 10q11 4 22 0v12q-11 3-22 0z" fill="#6f90ff" stroke="#224"/><ellipse cx="12" cy="17" rx="6" ry="3.500" fill="none" stroke="#fff" stroke-width="2"/>',
 mesh:'<path d="M9 2q6 5 14 3l-7 15q-8 2-14-4zM6 9q7 5 14 3M4 13q7 4 14 3M14 4L8 19M18 5L12 20" fill="#90abff" stroke="#223"/>',
 puzzle:'<path d="M2 6l4 1 1-4 4 1-1 4 4 2-2 4-4 0-1 3-4-2 1-3-3-2z" fill="#ff9f1a" stroke="#111"/><path d="M11 13l3 0 1-3 4 2-1 3 4 2-2 4-4-1-1 3-4-2 1-3-3-2z" fill="#fff" stroke="#111"/>',
 boom:'<path d="M1 23V7l5 9 0-13 7 9 9-9-5 10 6 1-7 3 3 6z" fill="#ff9a10" stroke="#9a4a00"/>',
 trim:'<path d="M1 11h12v6H1z" fill="#fff" stroke="#111" stroke-width="1.500"/><path d="M13 1h6l-6 14z" fill="#1c3b8c"/><path d="M14 16l3-3 6 5-3 4z" fill="#eee" stroke="#333"/>',
 split:'<path d="M2 12h20v6H2z" fill="#fff" stroke="#111" stroke-width="1.500"/><path d="M13 2h6l-6 14z" fill="#1c3b8c"/>',
 group:'<path d="M7 3q10-4 9 7 8 4 2 11-4 2-7-2-8 3-8-5 0-5 4-5z" fill="#111"/><circle cx="12" cy="8" r="4.500" fill="#a7a0ff"/><circle cx="8" cy="15" r="4.500" fill="#fff" stroke="#111"/><circle cx="16" cy="15" r="4.500" fill="#1a1484" stroke="#111"/>',
 ungroup:'<circle cx="12" cy="6" r="4" fill="#a7a0ff" stroke="#335"/><circle cx="6" cy="17" r="4" fill="#fff" stroke="#111"/><circle cx="18" cy="17" r="4" fill="#1a1484" stroke="#111"/>',
 ec1:'<path d="M1 6q16-2 16 16" fill="none" stroke="#111" stroke-width="2"/>'+sq(7,6)+sq(17,16), ec2:'<path d="M1 6q16-2 16 16" fill="none" stroke="#111" stroke-width="2"/><path d="M1 2h9l12 12v9" fill="none" stroke="#111" stroke-dasharray="1.500 1.500"/>'+sq(9,2)+sq(21,14),
 text:'<path d="M3 2h18v5h-3l-1-2h-3v14l2 1v2H8v-2l2-1V5H7L6 8H3z" fill="#6a8bff" stroke="#124"/>', move: box(3,14,7,'#eee')+box(15,2,7)+'<path d="M10 14l6-6M12 8h4v4" '+K+'/>',
 copy4: box(3,2,6)+box(12,9,6)+box(16,5,6)+box(3,15,6,'#eee')+box(15,17,6), rot:'<path d="M2 3h5v14H2z" fill="#fff" stroke="#111" stroke-width="1.500"/><path d="M7 6l8 3M12 5l3 4-4 1" '+K+'/><path d="M9 18L18 8l5 4-9 10z" fill="#6a8bff" stroke="#113"/>',
 bool:'<path d="M2 6l11-4 9 4v12l-9 4-11-3z" fill="#5577f0" stroke="#113" stroke-width="1.300"/><path d="M2 6l9 3 11-3-9-4z" fill="#a5bbff"/><path d="M9 14h8v6l-5 2-3-1z" fill="#fff" stroke="#111"/>',
 ext:'<path d="M1 20l4-4h18l-4 5z" fill="#7f9dff" stroke="#113"/><path d="M6 17V3M12 17V3M18 17V3M4 6l2-3 2 3M10 6l2-3 2 3M16 6l2-3 2 3" stroke="#fff" stroke-width="2" fill="none"/>',
 array:[3,10,17].map(x=>[3,10,17].map(y=>box(x,y,4,y==17&&x==3?'#fff':'#7f9dff')).join('')).join(''),
 align: box(7,2,9,'#eee')+box(9,10,5,'#eee')+box(8,16,7,'#eee')+'<path d="M12 1v22" stroke="#c33" stroke-width="1.500"/>',
 bend:'<path d="M2 7l5-4h3v16l-6 3H2z" fill="#eee" stroke="#111"/><path d="M13 5l8-3 1 3-5 15-7 2-1-3z" fill="#6a8bff" stroke="#113"/>',
 check:'<path d="M2 13l3-2 4 6L21 2 9 22z"/>', shapes:'<path d="M2 8l8-4 5 4v8l-6 4-7-4z" fill="#bbb" stroke="#222"/><path d="M16 6l6 14q-5 3-10 0z" fill="#999" stroke="#222"/>',
 pyr:'<path d="M12 8l10 10-10 5L2 17z" fill="#ffb733" stroke="#740"/><path d="M12 8v15L2 17z" fill="#ffdf90"/><path d="M9 6l3-4 5-1h6v5h-7l-4 2z" fill="#ddd" stroke="#111"/>'
};
const tri = '<svg class="absolute bottom-0 right-0 size-[6px]" viewBox="0 0 6 6"><path d="M6 0v6H0z" fill="#555"/></svg>';
const btn = n => { const f = n.endsWith('*'); n = n.replace('*', '');
  return n === '|' ? '<div class="mx-[2px] h-7 w-[2px] shrink-0 border-l border-[#c4c4c8]"></div>'
   : `<button aria-label="${n}" class="relative grid size-7 shrink-0 place-items-center"><svg class="size-[22px]" viewBox="0 0 24 24">${I[n]}</svg>${f ? tri : ''}</button>`; };
const bar = (id, s) => $(id).innerHTML = s.split(' ').map(btn).join('');
bar('tb1', 'new open save* print props cut copy paste undo* hand rotate zoom zoomwin zoomext zoomsel zoomundo* four* car* cplane* circ* sel* bulb* lock* layers* color* sphere sphere2* blue* spot* gear* dims* grass help*');
bar('tb2', 'vray | teapot* teapotwin win | dome* cube* plane fur clip tape*');
bar('tb3', 'bulb bulbY bulbSel bulbInv bulbSwap | pageBulb pageObj pageLay lock unlock lockSel lockInv lockSwap | cageOff cageOn | clipOn clipOff | two two two');
bar('tools', 'ptr pt* pline* curve* circle* ellipse* arc* rect* poly* fillet* srf* strip* bbox* balls* proj* mesh* puzzle boom trim split group* ungroup ec1 ec2* text move* copy4 rot bool* ext* array* align* bend* check* shapes* pyr*');

$('menu').innerHTML = '_File _Edit _View _Curve _Surface S_olid _Mesh _Dimension _Transform Too_ls _Analyze _Render _Panels V-Ray _Help'.split(' ')
  .map(m => `<a href="#">${m.replace(/_(.)/, '<u>$1</u>')}</a>`).join('');
$('tabs').innerHTML = 'Standard,CPlanes,Set View,Display,Select,Viewport Layout,Visibility,Transform,Curve Tools,Surface Tools,Solid Tools,Mesh Tools,Render Tools,Drafting,New in V6'.split(',')
  .map((t, i) => `<button role="tab" class="relative isolate h-[17px] whitespace-nowrap px-[11px] before:absolute before:inset-y-0 before:left-0 before:right-4 before:-z-10 before:origin-bottom-left before:-skew-x-[28deg] before:rounded-tl before:border-l before:border-t before:border-[#bcc4da] after:absolute after:inset-y-0 after:left-5 after:right-0 after:-z-10 after:rounded-tr after:border-r after:border-t after:border-[#bcc4da] ${i ? 'before:bg-[#d9d9d9] after:bg-[#d9d9d9]' : 'before:bg-[#ebecf0] after:bg-[#ebecf0]'}">${t}</button>`).join('');
$('vtabs').innerHTML = ['Front', 'Perspective', 'Top', 'Right', ''].map((t, i) =>
  `<button role="tab" aria-label="${t || 'Add'}" class="relative isolate h-[19px] pl-[10px] pr-[5px] before:absolute before:inset-y-0 before:left-0 before:right-2 before:-z-10 before:origin-top-left before:skew-x-[20deg] before:border-b before:border-l before:border-[#bcc4da] after:absolute after:inset-y-0 after:left-4 after:right-0 after:-z-10 after:rounded-br after:border-b after:border-r after:border-[#bcc4da] ${i == 1 || i == 4 ? 'before:bg-[#f3f3f7] after:bg-[#f3f3f7]' : 'before:bg-[#d9d9d9] after:bg-[#d9d9d9]'}">${t || '<svg class="mx-[1px] size-[10px]" viewBox="0 0 10 10" fill="none" stroke="#666"><path d="M3.500.5h3v3h3v3h-3v3h-3v-3h-3v-3h3z"/></svg>'}</button>`).join('');
const P = { mat: '<path d="M3 20l3-8 9-8 5 4-9 9z" fill="#ddd" stroke="#333"/><path d="M12 6l5-3 4 4-4 5z" fill="#d4502a" stroke="#611"/>', hlp: '<path d="M2 2h20v20H2z" fill="#4a69c8" stroke="#113"/><path d="M2 2h20v4H2z" fill="#dde"/><path d="M9 12q0-3 3-3t3 3-3 3v2M12 19v1.500" stroke="#fff" stroke-width="2" fill="none"/>' };
$('ptabs').innerHTML = [['Prop...', I.color], ['Layers', I.layers], ['Rend...', I.blue + '<path d="M12 6l6-5 5 1v4l-5 1-3 3z" fill="#ddd" stroke="#111"/>'], ['Mate...', P.mat], ['Librar...', I.open], ['Help', P.hlp]]
  .map(([t, ic], i) => `<button role="tab" class="relative isolate flex h-5 w-[65px] shrink-0 items-center gap-[2px] whitespace-nowrap pl-1 text-[12px] before:absolute before:inset-y-0 before:left-0 before:right-5 before:-z-10 before:rounded-tl before:border-l before:border-t before:border-[#bcc4da] after:absolute after:inset-y-0 after:left-3 after:right-[10px] after:-z-10 after:origin-top-right after:skew-x-[38deg] after:border-r after:border-t after:border-[#bcc4da] ${i ? 'before:bg-[#d9d9d9] after:bg-[#d9d9d9]' : 'before:bg-[#f7f7fa] after:bg-[#f7f7fa]'}"><svg class="size-4 shrink-0" viewBox="0 0 24 24">${ic}</svg>${t}</button>`).join('')
  + '<button aria-label="Panel options" class="ml-1 grid size-5 place-items-center"><svg class="size-[14px]" viewBox="0 0 16 16" fill="none" stroke="#bbb"><circle cx="8" cy="8" r="4" stroke-width="4"/><circle cx="8" cy="8" r="7" stroke-width="2" stroke-dasharray="3 2.500"/></svg></button>';

const tick = (id, on, dis) => `<span class="grid size-[13px] shrink-0"><input type="checkbox" id="${id}" ${on ? 'checked' : ''} ${dis ? 'disabled' : ''} class="col-start-1 row-start-1 size-[13px] appearance-none border ${dis ? 'border-[#bbb] bg-[#e2e2e2]' : 'border-[#333] bg-white'}">${on ? '<svg class="pointer-events-none col-start-1 row-start-1 size-[13px]" viewBox="0 0 13 13" fill="none" stroke="#222" stroke-width="1.300"><path d="M2.500 6.500l3 3 5-6"/></svg>' : ''}</span>`;
const place = '<button class="h-[19px] w-full border border-[#adadad] bg-[#e1e1e1] leading-[16px]">Place...</button>';
const field = (l, v) => `<input id="p-${l}" aria-label="${l}" value="${v}" class="h-5 w-full pl-1 outline-none">`;
const groups = { Viewport: [['Title', 'Perspective'], ['Width', '1435', 1], ['Height', '730', 1], ['Projection', 'S']],
  Camera: [['Lens Length', '50.0'], ['Rotation', '0.0'], ['X Location', '175.519'], ['Y Location', '-24.436'], ['Z Location', '35.065'], ['Distance to Target', '315.010', 2], ['Location', 'B']],
  Target: [['X Target', '-123.791'], ['Y Target', '-92.983'], ['Z Target', '-35.262'], ['Location', 'B']],
  Wallpaper: [['Filename', 'F'], ['Show', 'C'], ['Gray', 'C']] };
const val = (l, v) => v === 'B' ? place : v === 'C' ? tick('p-' + l, 1)
  : v === 'S' ? `<div class="grid"><select id="p-${l}" aria-label="${l}" class="col-start-1 row-start-1 h-5 w-full appearance-none pl-[3px]"><option>Perspective</option></select><span class="pointer-events-none col-start-1 row-start-1 grid h-5 w-5 place-items-center justify-self-end border-l border-t border-[#aaa] bg-[#e1e1e1]"><svg class="h-[5px] w-2" viewBox="0 0 8 5" fill="none" stroke="#444"><path d="M0 0l4 4 4-4"/></svg></span></div>`
  : v === 'F' ? '<div class="flex justify-between pl-[3px] leading-5"><span>(none)</span><button aria-label="Browse" class="h-[19px] w-[19px] border border-[#adadad] bg-[#e1e1e1] leading-3">...</button></div>' : field(l, v);
$('props').innerHTML = '<table class="w-full table-fixed border-collapse border border-[#e8e9ee]"><colgroup><col class="w-[18px]"><col class="w-[182px]"><col></colgroup>' + Object.entries(groups).map(([g, rows]) =>
  `<tbody><tr class="h-[26px]"><th colspan="3" class="p-0 pl-[3px] text-left text-[13px] font-normal">${g}</th></tr>` + rows.map(([l, v, d]) =>
  `<tr class="h-[21px] border-y border-[#e8e9ee] bg-white"><td class="bg-[#f7f7fa] p-0"></td><td class="p-0 pl-[5px] ${d == 1 ? 'text-[#777]' : ''}"><label for="p-${l}">${l}</label></td><td class="border-l border-[#e8e9ee] p-0 ${v == 'C' ? 'pl-[2px]' : v == 'B' ? 'pl-[1px]' : ''} ${d ? 'bg-[#ebecf0]' : ''} ${d == 1 ? 'text-[#777]' : ''}">${val(l, v)}</td></tr>`).join('') + '</tbody>').join('') + '</table>';

$('osnap').innerHTML = [['End', 1, 'w-[43px]'], ['Near', 1, 'w-12'], ['Point', 0, 'w-[51px]'], ['Mid', 1, 'w-11'], ['Cen', 1, 'w-11'], ['Int', 1, 'w-[37px]'], ['Perp', 1, 'w-[47px]'], ['Tan', 1, 'w-[42px]'], ['Quad', 0, 'w-[52px]'], ['Knot', 0, 'w-12'], ['Vertex', 0, 'w-[57px]'], ['Project', 0, 'w-[68px]', 1], ['Disable', 0, 'w-[68px]', 1]]
  .map(([t, on, w, d]) => `<div class="flex shrink-0 items-center gap-[3px] ${w}">${tick('o-' + t, on, d)}<label for="o-${t}">${t}</label></div>`).join('');
$('status').innerHTML = [['CPlane', 'w-[50px]'], ['x -105.471', 'w-[88px]'], ['y -118.160', 'w-[88px]'], ['z 0.000', 'w-[88px]'], ['Millimeters', 'w-[88px]'], ['<i class="mx-[3px] size-[14px] bg-black"></i>Default', 'w-[168px] justify-start!'], ['Grid Snap', 'w-16'], ['Ortho', 'w-[46px]'], ['Planar', 'w-[47px] bg-[#e2f3fd] font-bold'], ['Osnap', 'w-12 bg-[#e2f3fd] font-bold'], ['SmartTrack', 'w-[73px]'], ['Gumball', 'w-[59px] bg-[#e2f3fd] font-bold'], ['Record History', 'w-[92px]'], ['Filter', 'w-10']]
  .map(([t, c]) => `<button class="flex shrink-0 items-center justify-center whitespace-nowrap border-r border-[#bcc4da] ${c}">${t}</button>`).join('') + '<span class="pl-[1px]">Minutes from last save: 6</span>';

const rh = '<use href="#rhino"/>';
$('apps').innerHTML = [
 ['Cortana', '<circle cx="15" cy="16" r="9" fill="none" stroke="#111" stroke-width="3"/>', '', ''],
 ['Task view', '<path d="M6 6v4h13V6M6 26v-4h13v4M6 12h13v8H6zM24 6v3M24 13v13" fill="none" stroke="#111" stroke-width="1.800"/>', '', ''],
 ['Edge', '<path d="M2 18A14 14 0 0116 2q13 1 14 12 0 6-7 7-6 0-4-4 1-5-5-6-8 0-12 7z" fill="#35c1b0"/><path d="M16 2q13 1 14 12 0 6-7 7-5 0-4-4 8-4 5-9-3-5-8-6z" fill="#5fd35a"/><path d="M2 16q3-7 12-7 5 1 5 5-6-2-6 5 0 7 8 8 4 0 7-2-5 7-13 6Q2 29 2 16z" fill="#1173cf"/><path d="M13 17q-1 8 8 10 4 0 7-2-5 6-12 6Q5 27 13 17z" fill="#0c4f9c"/>', '', ''],
 ['Explorer', '<path d="M3 5h10l2 3h14v18H3z" fill="#f5b92e"/><path d="M3 9h26v19H3z" fill="#ffdc73"/><path d="M8 28V18h16v10h-4v-6h-8v6z" fill="#3a8fd8"/>', 'bg-[#0078d7]', ''],
 ['Store', '<path d="M10 9V3h12v6" fill="none" stroke="#222" stroke-width="2"/><path d="M2 8h28v22q-14 3-28 0z" fill="#2b2b2b"/><path d="M10 14h5v5h-5z" fill="#f25022"/><path d="M17 14h5v5h-5z" fill="#7fba00"/><path d="M10 21h5v5h-5z" fill="#00a4ef"/><path d="M17 21h5v5h-5z" fill="#ffb900"/>', '', ''],
 ['Mail', '<path d="M2 12L16 2l14 10v18H2z" fill="#0a5ea8"/><path d="M5 12h22L16 22z" fill="#fff"/><path d="M2 12l14 10 14-10v18H2z" fill="#29b0ee"/><path d="M2 30L16 20l0 10z" fill="#1a93dc"/>', '', ''],
 ['Chrome', '<circle cx="16" cy="16" r="14" fill="#3aa757"/><path d="M16 16L3.900 9A14 14 0 0128.100 9z" fill="#e94335"/><path d="M16 16L28.100 9A14 14 0 0116 30z" fill="#fbbc05"/><circle cx="16" cy="16" r="7" fill="#fff"/><circle cx="16" cy="16" r="5.500" fill="#4285f4"/>', 'bg-[#0078d7]', ''],
 ['Rhino', rh, 'bg-[#0078d7]', ''],
 ['PIXN', '<rect x="1" y="1" width="30" height="30" rx="4" fill="#26282a"/><circle cx="17" cy="16" r="6" fill="none" stroke="#3bb" stroke-width="2" stroke-dasharray="4 1"/><circle cx="14" cy="16" r="2.500" fill="#c33"/><text x="2" y="19" font-size="8" fill="#3bb">P</text><text x="24" y="19" font-size="8" fill="#3bb">N</text>', 'bg-[#0078d7]', ''],
 ['Rhino', rh, 'bg-[#0078d7]', ''], ['Rhino', rh, 'bg-[#3fe03f]', 'border-r border-[#aab] bg-linear-to-r from-[#abdfae] from-45% to-[#d3dadf] to-45%']]
 .map(([n, p, u, c]) => `<button aria-label="${n}" class="grid w-[49px] grid-rows-[38px_2px] place-items-center ${c}"><svg class="size-6" viewBox="0 0 32 32">${p}</svg><i class="h-[2px] w-10 ${u}"></i></button>`).join('');

$('bolts').innerHTML = [560,197,632,184,706,180,780,187,853,204,1079,343,1129,401,1169,466,1202,534,1224,607,1215,864,1190,932,1155,995,1112,1052,1061,1102,841,1210,771,1219,700,1218,630,1209,562,1190,352,1056,307,1002,267,943,237,879,213,811,208,566,230,498,259,434,297,376,343,321]
  .map((x, i, a) => i % 2 ? '' : `<use href="#bolt" x="${x}" y="${a[i + 1]}"/>`).join('');
$('lugs').innerHTML = [[742,590],[603,632],[830,710],[605,780],[748,828]].map(p => `<use href="#lug" x="${p[0]}" y="${p[1]}"/>`).join('');
const shape = $('top').getAttribute('d');
$('bands').innerHTML = [['#888', 66], ['#000', 60], ['#666', 51], ['#000', 45], ['#222', 37], ['#8a8a8a', 27], ['#000', 20], ['#bbb', 10]].map(([c, w]) => `<path d="${shape}" stroke="${c}" stroke-width="${w}"/>`).join('');
</script>
</body>
</html>
